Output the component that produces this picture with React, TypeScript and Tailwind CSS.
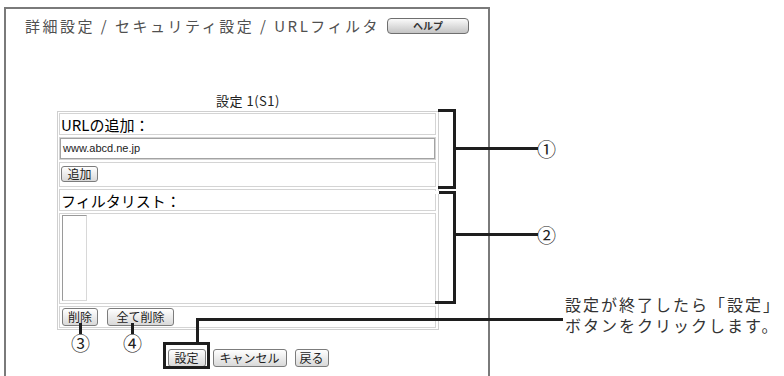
import type { ReactNode } from "react";

const jp = "font-['Noto_Sans_CJK_JP','Noto_Sans',sans-serif]";

function Btn({ children, className = "" }: { children: ReactNode; className?: string }) {
  return (
    <button
      className={`flex items-center justify-center rounded-[3px] border border-[#7c7c7c] bg-linear-to-b from-white to-[#d9d9d9] text-[12px] leading-none text-[#222] ${className}`}
    >
      {children}
    </button>
  );
}

function Cell({ children, className = "" }: { children?: ReactNode; className?: string }) {
  return <div className={`border border-[#d4d4d4] ${className}`}>{children}</div>;
}

function Num({ children, className = "" }: { children: ReactNode; className?: string }) {
  return (
    <div className={`absolute text-[19px] leading-[19px] text-[#222] ${className}`}>{children}</div>
  );
}

export default function App() {
  return (
    <div className={`relative w-[784px] h-[376px] overflow-hidden bg-white ${jp}`}>
      <div className="pt-[7px] pl-[4px]">
        <div className="w-[486px] h-[400px] border-2 border-[#7a7a7a]">
          {/* title row */}
          <div className="flex items-center justify-between pt-[7px] pl-[19px] pr-[19px]">
            <span className="text-[15px] leading-[20px] tracking-[2.5px] text-[#505050]">
              詳細設定 / セキュリティ設定 / URLフィルタ
            </span>
            <button className="w-[82px] h-[16px] rounded-[4px] border border-[#6f6f6f] bg-linear-to-b from-[#fafafa] to-[#c4c4c4] text-[10px] font-bold leading-none text-[#333]">
              ヘルプ
            </button>
          </div>

          <div className="ml-[51px] w-[382px] mt-[57px]">
            <div className="text-center text-[13px] leading-[16px] tracking-[0.5px] text-[#222]">
              設定 1(S1)
            </div>
            <div className="mt-[2px] border border-[#cfcfcf] pl-[1px] pr-[2px] py-[1px] flex flex-col gap-[2px]">
              <Cell className="h-[22px] flex items-center pl-[1px]">
                <span className="text-[15px] leading-none text-black">URLの追加：</span>
              </Cell>
              <Cell className="h-[23px]">
                <div className="h-full border border-[#a3a3a3] flex items-center pl-[2px] font-['Liberation_Sans',sans-serif] text-[11px] text-[#222]">
                  www.abcd.ne.jp
                </div>
              </Cell>
              <Cell className="h-[25px] pl-[1px] pt-[3px]">
                <Btn className="w-[37px] h-[16px]">追加</Btn>
              </Cell>
              <Cell className="h-[22px] flex items-center pl-[1px]">
                <span className="text-[15px] leading-none text-black">フィルタリスト：</span>
              </Cell>
              <Cell className="h-[91px] pl-[2px] pt-[1px]">
                <div className="w-[25px] h-[86px] border border-[#9a9a9a] border-r-[#d8d8d8] border-b-[#d8d8d8] bg-white" />
              </Cell>
              <Cell className="h-[22px] flex items-start gap-[9px] pl-[2px] pt-[1px]">
                <Btn className="w-[36px] h-[18px]">削除</Btn>
                <Btn className="w-[67px] h-[18px]">全て削除</Btn>
              </Cell>
            </div>
            <div className="mt-[19px] flex justify-center gap-[7px]">
              <Btn className="w-[38px] h-[18px]">設定</Btn>
              <Btn className="w-[74px] h-[18px]">キャンセル</Btn>
              <Btn className="w-[34px] h-[18px] ml-[1px]">戻る</Btn>
            </div>
          </div>
        </div>
      </div>

      {/* annotations */}
      <div className="absolute left-[438px] top-[109px] w-[18px] h-[80px] border-y-[3px] border-r-[3px] border-[#1e1e1e]" />
      <div className="absolute left-[456px] top-[147px] w-[82px] h-[3px] bg-[#1e1e1e]" />
      <Num className="left-[537px] top-[139px]">①</Num>

      <div className="absolute left-[435px] top-[191px] w-[21px] h-[113px] border-y-[3px] border-r-[3px] border-[#1e1e1e]" />
      <div className="absolute left-[435px] top-[191px] w-[4px] h-[3px] bg-white" />
      <div className="absolute left-[456px] top-[233px] w-[82px] h-[3px] bg-[#1e1e1e]" />
      <Num className="left-[537px] top-[225px]">②</Num>

      <div className="absolute left-[79px] top-[323px] w-[3px] h-[11px] bg-[#1e1e1e]" />
      <Num className="left-[71px] top-[333px]">③</Num>
      <div className="absolute left-[131px] top-[323px] w-[3px] h-[11px] bg-[#1e1e1e]" />
      <Num className="left-[123px] top-[333px]">④</Num>

      <div className="absolute left-[163px] top-[342px] w-[47px] h-[27px] border-[3px] border-[#1e1e1e]" />
      <div className="absolute left-[196px] top-[318px] w-[3px] h-[25px] bg-[#1e1e1e]" />
      <div className="absolute left-[196px] top-[318px] w-[367px] h-[3px] bg-[#1e1e1e]" />
      <div className="absolute left-[565px] top-[294px] flex flex-col text-[16px] leading-[21px] tracking-[2px] text-[#333] whitespace-nowrap">
        <span>設定が終了したら「設定」</span>
        <span>ボタンをクリックします。</span>
      </div>
    </div>
  );
}
